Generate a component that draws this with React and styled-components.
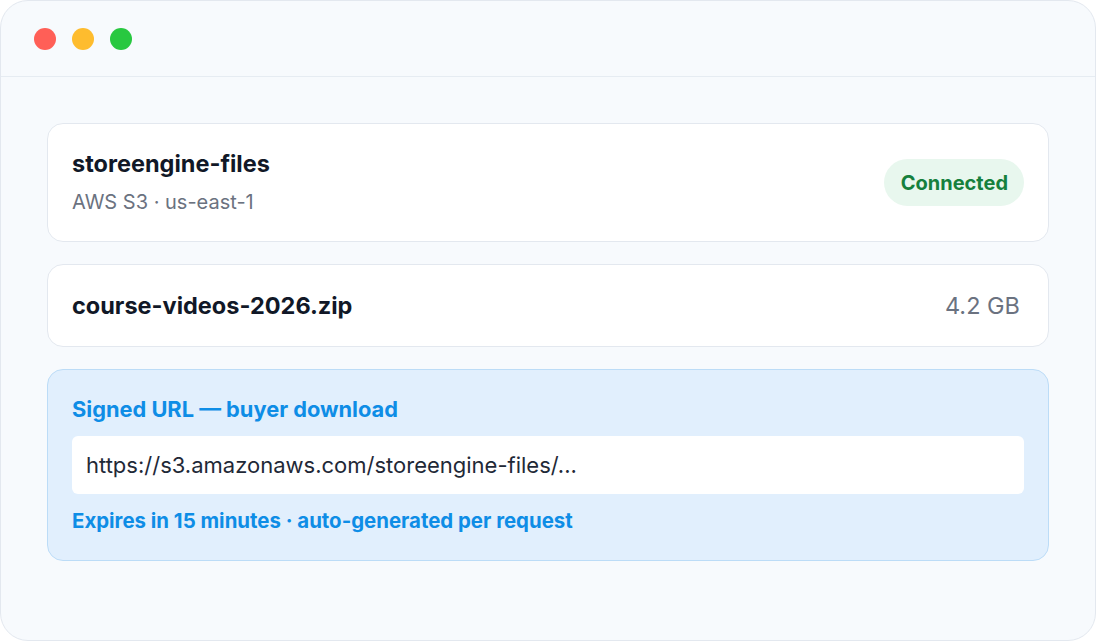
import React from "react";
import styled, { createGlobalStyle } from "styled-components";

const Global = createGlobalStyle`
  html, body { margin: 0; padding: 0; background: #ffffff; }
  body { font-family: Inter, "Noto Sans", sans-serif; -webkit-font-smoothing: antialiased; }
  * { box-sizing: border-box; }
`;

const Window = styled.div`
  width: 1096px;
  height: 641px;
  border: 1px solid #e3e8ef;
  border-radius: 28px;
  background: #f7fafd;
  overflow: hidden;
  display: flex;
  flex-direction: column;
`;

const TitleBar = styled.div`
  height: 76px;
  flex-shrink: 0;
  display: flex;
  align-items: center;
  gap: 16px;
  padding-left: 33px;
  border-bottom: 1px solid #e6ecf2;
`;

const Dot = styled.span`
  width: 22px;
  height: 22px;
  border-radius: 50%;
  background: ${(p) => p.$color};
`;

const Body = styled.div`
  padding: 46px 46px;
  display: flex;
  flex-direction: column;
  gap: 22px;
`;

const Card = styled.div`
  height: ${(p) => p.$h}px;
  background: #ffffff;
  border: 1px solid #e3e8ef;
  border-radius: 16px;
  padding: 0 24px;
  display: flex;
  align-items: center;
  justify-content: space-between;
`;

const Stack = styled.div`
  display: flex;
  flex-direction: column;
  gap: 12px;
`;

const Name = styled.div`
  font-size: 23.5px;
  line-height: 28px;
  font-weight: 700;
  color: #111827;
`;

const Sub = styled.div`
  font-size: 20px;
  line-height: 25px;
  color: #6b7280;
`;

const Badge = styled.div`
  height: 47px;
  padding: 0 16px 0 17px;
  border-radius: 24px;
  background: #e8f7ee;
  color: #15803d;
  font-size: 20px;
  font-weight: 700;
  display: flex;
  align-items: center;
`;

const Size = styled.div`
  font-size: 23.5px;
  color: #6b7280;
  margin-right: 4px;
`;

const SignedCard = styled.div`
  background: #e1effd;
  border: 1px solid #bcdcf7;
  border-radius: 16px;
  padding: 25px 24px 26px;
  display: flex;
  flex-direction: column;
`;

const BlueTitle = styled.div`
  font-size: 21.8px;
  line-height: 28px;
  font-weight: 700;
  color: #0e8de6;
`;

const UrlBox = styled.div`
  margin-top: 13px;
  height: 58px;
  background: #ffffff;
  border-radius: 6px;
  padding: 0 14px;
  display: flex;
  align-items: center;
  font-size: 22px;
  color: #1f2937;
`;

const Note = styled.div`
  margin-top: 14px;
  font-size: 20.4px;
  line-height: 26px;
  font-weight: 700;
  color: #0e8de6;
`;

export default function App() {
  return (
    <>
      <Global />
      <Window>
        <TitleBar>
          <Dot $color="#ff5f57" />
          <Dot $color="#febc2e" />
          <Dot $color="#28c840" />
        </TitleBar>
        <Body>
          <Card $h={119}>
            <Stack>
              <Name>storeengine-files</Name>
              <Sub>AWS S3 · us-east-1</Sub>
            </Stack>
            <Badge>Connected</Badge>
          </Card>
          <Card $h={83}>
            <Name>course-videos-2026.zip</Name>
            <Size>4.2 GB</Size>
          </Card>
          <SignedCard>
            <BlueTitle>Signed URL — buyer download</BlueTitle>
            <UrlBox>https://s3.amazonaws.com/storeengine-files/...</UrlBox>
            <Note>Expires in 15 minutes · auto-generated per request</Note>
          </SignedCard>
        </Body>
      </Window>
    </>
  );
}
